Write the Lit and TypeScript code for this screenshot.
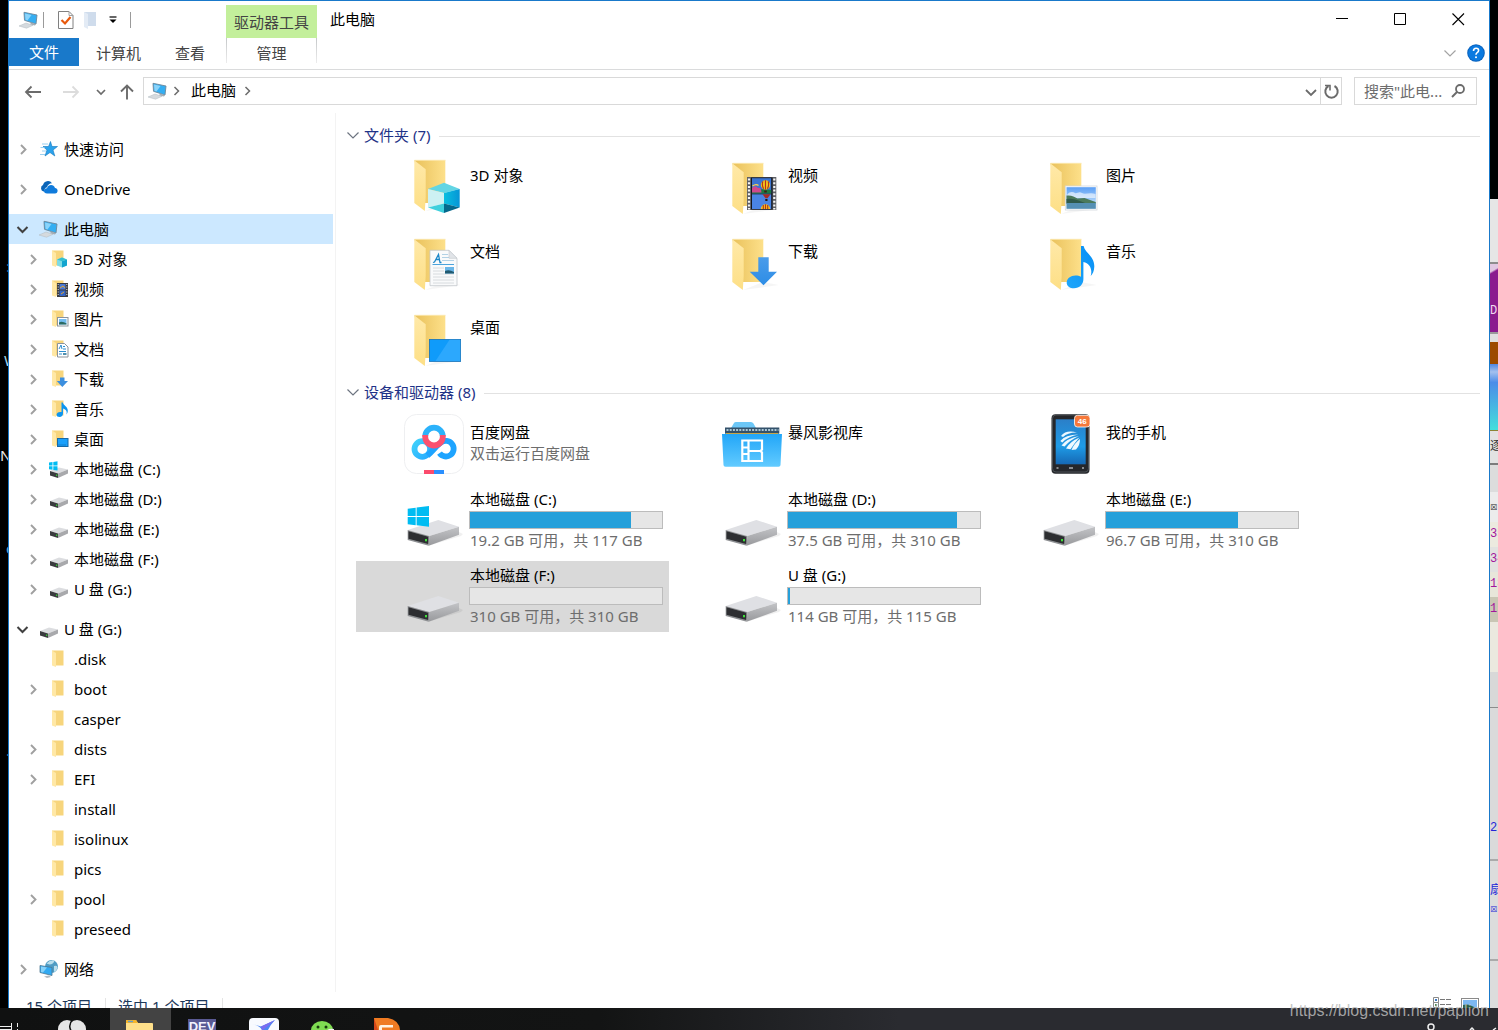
import { LitElement, html, svg, css, nothing, TemplateResult } from "lit";
import { customElement, state } from "lit/decorators.js";

type Art = TemplateResult;

interface TreeNode {
  id: string;
  label: string;
  icon: keyof typeof smallArt;
  level: 0 | 1;
  arrow?: "closed" | "open";
  spaced?: boolean;
}

interface Tile {
  label: string;
  art: Art;
  note?: string;
  used?: number;
}

interface Strip {
  h: number;
  bg: string;
  text?: string;
  ink?: string;
}

/* ---------- large tile artwork, 60 x 60 ---------- */

const folder = svg`
  <path d="M21 57l22-3 14-2-16-3z" fill="#000" opacity=".04"/>
  <path d="M10.3 6.3H41.3V49H21z" fill="url(#folderBack)"/>
  <path d="M10.3 6.3L21.700 15.3V43l-.9 14-10.500-8z" fill="url(#folderFlap)"/>
  <path d="M10.500 6.3h31" stroke="#fbe7ac" stroke-width=".8"/>`;

const cubeArt = svg`
  <g transform="translate(0 -3)">${folder}</g>
  <path d="M24 32l16-6.300L55.700 32 40 36z" fill="#62d5e4"/>
  <path d="M24 32l16 4v10.500L24 50.500z" fill="#cdf1f3"/>
  <path d="M40 36l15.700-4v18.500L40 46.500z" fill="url(#cubeSide)"/>
  <path d="M24 50.500l16-4V56z" fill="#3fd0dd"/>
  <path d="M40 46.500l15.700 4L40 56z" fill="#04688c"/>`;

const videoArt = svg`
  ${folder}
  <rect x="25" y="20" width="29.300" height="33" fill="#5d5f65"/>
  <path d="M27 21.500v31M52.300 21.500v31" stroke="#f6f6f6" stroke-width="2.200" stroke-dasharray="2 1.700"/>
  <rect x="29" y="20.500" width="21.500" height="32" fill="#15171c"/>
  <rect x="30" y="21.200" width="19.200" height="15.300" fill="#3b74d2"/>
  <path d="M30 34q9-3 19.200-1v3.500H30z" fill="#1d7a3f"/>
  <path d="M30 31q3-3.500 6 0 3-1 3.500 4.500H30z" fill="#d0488e"/>
  <path d="M30.500 29q3.500-2.500 6-.5" stroke="#ffd14a" stroke-width="1.400" fill="none"/>
  <circle cx="43.500" cy="28" r="4.700" fill="#f2c21c"/>
  <path d="M43.500 23.300v9.400M40.800 24.300q-1.200 4 .8 7.400M46.200 24.300q1.200 4-.8 7.400" stroke="#b5301c" stroke-width="1.100" fill="none"/>
  <path d="M42.200 33.500h2.600v2h-2.600z" fill="#3d2015"/>
  <rect x="30" y="37.300" width="19.200" height="14.700" fill="#4a84e4"/>
  <path d="M40.500 37.300h8l-3 4h-2z" fill="#a52c22"/><path d="M43.300 42h2.200v2h-2.200z" fill="#1c1512"/>
  <path d="M38.800 52a4.700 4.700 0 0 1 9.400 0z" fill="#f2c21c"/>
  <path d="M41.300 48v4M43.500 47.300V52M45.700 48v4" stroke="#b5301c" stroke-width="1.100"/>`;

const pictureArt = svg`
  ${folder}
  <rect x="25.300" y="29" width="31.700" height="24" fill="#fff" stroke="#d3d7dc" stroke-width=".8"/>
  <rect x="26.500" y="30.200" width="29.300" height="21.600" fill="url(#sky)"/>
  <path d="M27 38c3-4 6-3 8-2s4-2 7 0 8-1 13.500 1v4H27z" fill="#fff" opacity=".6"/>
  <path d="M26.500 38.500c5-.5 8 1 11 3l7-.5c4 1 7 3 11.300 4v1.500H26.500z" fill="#4b7a5c"/>
  <path d="M26.500 42q6-1 12 1.500l8 3H26.500z" fill="#2f5a4c"/>
  <path d="M26.500 46h29.300v5.800H26.500z" fill="#5590b4"/>`;

const docArt = svg`
  ${folder}
  <path d="M26 17.300h19l8 8V52.700H26z" fill="#f9fafb" stroke="#c3c7cc" stroke-width=".8"/>
  <path d="M45 17.300v8h8z" fill="#e1e4e8" stroke="#c3c7cc" stroke-width=".6"/>
  <path d="M29 29.500l1.500-.5 4-7.500 1.500 8h1.500M31.500 26.500h4" fill="none" stroke="#1c87c9" stroke-width="1.300"/>
  <path d="M38 21.500h6M38 24.500h7M38 27.500h12" stroke="#9fc6e0" stroke-width=".8"/>
  <path d="M28.500 31.500h21.500" stroke="#4aa3dc"/>
  <path d="M29 35h11M29 38h11M29 41h21M29 44h21M29 47h21M29 50h21" stroke="#cfd3d8" stroke-width=".8"/>
  <rect x="41" y="34" width="9" height="6.500" fill="#6ab6e8"/>
  <path d="M41 38q4-2 9 1v1.500h-9z" fill="#215a70"/>`;

const downloadArt = svg`
  ${folder}
  <path d="M36.300 24.300h10.400v14.400H55L41.500 52.300 27.700 38.700h8.600z" fill="url(#arrowFill)"/>`;

const musicArt = svg`
  ${folder}
  <path d="M41 13h2.600c1.400 7 10.800 10 10.700 20.500-.1 4.500-1.600 7.500-3.600 9.500 2-7-1-12.500-7.300-14V46c0 5.500-4 9.300-9.400 9.300-4.200 0-7.300-2-7.300-5.500 0-4.300 4-7.300 8.800-7.300 2.200 0 4 .4 5.500 1.200z" fill="url(#noteFill)"/>`;

const desktopArt = svg`
  ${folder}
  <rect x="25.400" y="30.400" width="31.200" height="22" fill="#0f9bfa" stroke="#1672b8" stroke-width=".8"/>
  <path d="M45.500 30.800h10.700v21.200H31.500z" fill="#3fb1ff" opacity=".6"/>`;

const drive = svg`
  <path d="M24.700 55.700L57 46l2-2-4-2z" fill="#000" opacity=".06"/>
  <path d="M3.700 40L34.300 30 55 36.700 25.300 46z" fill="#dfe0e4"/>
  <path d="M25.300 46L55 36.700v8L24.700 55.700z" fill="url(#driveSide)"/>
  <path d="M3.700 40l21.600 6-.6 9.700-21-5.700z" fill="#8e9093"/>
  <path d="M4.500 41.300l19.700 5.400v7.300L4.500 48.800z" fill="#2d2e31"/>
  <rect x="21" y="49" width="2" height="2.300" fill="#3ee03a"/>`;

const winLogo = svg`
  <path d="M3.700 18.800L11.700 17.700V26H3.700zM12.600 17.500L25 16v10H12.600zM3.700 27h8v8.300l-8-1zM12.600 27H25v9.700l-12.400-1.500z" fill="#00bcf2"/>`;

const systemDriveArt = svg`${drive}${winLogo}`;

const netdiskArt = svg`
  <rect x=".5" y=".5" width="59" height="59" rx="12" fill="#fff" stroke="#eeeff1"/>
  <circle cx="18.300" cy="35" r="7.800" fill="none" stroke="url(#ringLeft)" stroke-width="5.800"/>
  <path d="M23.500 41.500C29 37 33 31 37 28.600a7.800 7.800 0 1 1-1.500 10.600" fill="none" stroke="#1ea4ff" stroke-width="5.800"/>
  <path d="M21.200 22.500a8.800 8.800 0 0 1 17.600 0" fill="none" stroke="#2bb2fb" stroke-width="5.800"/>
  <path d="M21.200 21v1.700a8.800 8.800 0 0 0 17.600 0V21" fill="none" stroke="#fb5170" stroke-width="5.800"/>
  <path d="M20 56h10v4H20z" fill="#fb4a6c"/><path d="M30 56h10v4H30z" fill="#2a90ff"/>`;

const libraryArt = svg`
  <path d="M3 14h6l3-5q.5-1 2-1h15q1.500 0 2.500 1.500L34 14h23v10H3z" fill="#6cc7f7"/>
  <rect x="3" y="13.500" width="54.300" height="6" fill="#33516a"/>
  <path d="M4.500 16h52" stroke="#a9c6d6" stroke-width="2" stroke-dasharray="2 1.200"/>
  <path d="M4 19.500h52" stroke="#c9a545"/>
  <path d="M0 20h60l-1.500 31q0 1.700-2 1.700h-53q-2 0-2-1.700z" fill="url(#libraryFront)"/>
  <path d="M20.300 26.500h19.700v9l-1.500 1.500 1.500 1.500v8.500H20.300zM26.500 26.500V47M26.500 37h12" fill="none" stroke="#fff" stroke-width="2.200"/>
  <path d="M20 33.500h6M20 40h6" stroke="#fff" stroke-width="2"/>`;

const phoneArt = svg`
  <rect x="11.500" y=".3" width="38" height="59.400" rx="4" fill="#25272b"/>
  <rect x="12.500" y="1" width="36" height="57" rx="3.500" fill="none" stroke="#565a60" stroke-width=".8"/>
  <rect x="15.700" y="5.300" width="30" height="45" fill="url(#phoneScreen)"/>
  <path d="M21 22q5-6.500 16-3.500-9-.3-14 4.500zM20.300 27q5-6.500 18-6.500-10 1.800-16 8zM21.500 31.500q5-7 17.500-9.500-9 4-14.500 10.500zM26 34.500q4-7 13.500-11-5.500 6-9 11.800zM31.500 36q2.500-6.500 8.500-11 0 6.500-4 10.500z" fill="#eef9ff"/>
  <path d="M16.500 54h2M29 54h4M42 54h2" stroke="#a9adb3" stroke-width="1.500"/>
  <rect x="34.500" y="1.300" width="15.500" height="11.700" rx="3" fill="#f6783a" stroke="#fff" stroke-width=".8"/>
  <text x="42.300" y="9.900" text-anchor="middle" font-size="8" font-weight="700" fill="#fff" font-family="Liberation Sans, sans-serif">46</text>`;

/* ---------- small artwork, 20 x 20 ---------- */

const miniFolder = svg`
  <path d="M3 1.500h11.500v15H6z" fill="#f7d57c"/>
  <path d="M3 1.500l4 2.500v14L3 16.500z" fill="#ffe8a6"/>`;

const miniDrive = svg`
  <path d="M1 12l9-3.500 9 2-10 4z" fill="#dcdde0"/>
  <path d="M9 14.500l10-4v4L9 19z" fill="#a8a9ac"/>
  <path d="M1 12l8 2.500V19l-8-2.500z" fill="#3a3b3e"/>
  <rect x="7" y="15.500" width="1.300" height="1.500" fill="#35c733"/>`;

const computer = svg`
  <path d="M5 2.300L18 5l-1 9-11.500-3.700z" fill="#35aef2" stroke="#6e8799" stroke-width=".9"/>
  <path d="M6 3.500l6.500 1.500-4 5.500-2-.8z" fill="#8ad4fb"/>
  <path d="M12 12.500l5 1.500-1 1.500-5-1z" fill="#a3adb5"/>
  <path d="M0 16l7-3 7 2.300-6.500 2.900z" fill="#d5dade" stroke="#b3bac0" stroke-width=".5"/>`;

const smallArt = {
  star: svg`
    <path d="M11.500 2.500l1.500 5h5.500l-4.500 3.500 1.800 6-4.800-3.500-5 3.500 2-6-4-3.500h5.500z" fill="#2aa2ec" stroke="#1277bd" stroke-width=".6"/>
    <path d="M3 5h6M1.500 8.500h4M3 12h4M1 15.500h5" stroke="#9bd0f0"/>`,
  cloud: svg`
    <path d="M4.500 12.500a3.500 3.500 0 0 1-.5-6.500A5 5 0 0 1 13 4.200q-4 .3-5 4-3 .8-2.500 4.300z" fill="#0a64b8"/>
    <path d="M8 14.500c-4 0-4-5 0-5.300C9 5 15 5 16 9c3.500.3 3.500 5.500 0 5.500z" fill="#0f7bdc"/>`,
  computer,
  cube: svg`${miniFolder}<path d="M8 10.500l5-2 5 2v6l-5 2-5-2z" fill="#7fdbe5"/><path d="M13 12.300l5-1.800v6l-5 2z" fill="#12a5cf"/><path d="M8 10.500l5-2 5 2-5 1.800z" fill="#35bfd0"/>`,
  film: svg`${miniFolder}<rect x="8" y="4" width="11" height="14" fill="#3c3c3e"/><rect x="10.500" y="5" width="6" height="5.500" fill="#4a79d4"/><rect x="10.500" y="11.500" width="6" height="5.500" fill="#3566c4"/><path d="M11 9l3-2 2 2M12 15l3-2" stroke="#e3a530" fill="none"/><path d="M9.200 5v12M17.800 5v12" stroke="#ddd" stroke-dasharray="1 1.500"/>`,
  picture: svg`${miniFolder}<rect x="8.500" y="8.500" width="10.500" height="8.500" fill="#fff" stroke="#8b939a"/><rect x="10" y="10" width="7.500" height="5.500" fill="#74bdf0"/><path d="M10 13.500q3-2 7.500 1v1H10z" fill="#2c6a62"/>`,
  doc: svg`${miniFolder}<path d="M8.500 4.500h7l3.500 3.500v10H8.500z" fill="#fff" stroke="#8b939a"/><path d="M10 10l2-4 1 4M10 12.500h7M10 15h3M14 7.500h2M14 10h3" stroke="#2c8fd0" fill="none"/><rect x="14" y="14" width="3.500" height="2" fill="#4e8fae"/>`,
  download: svg`${miniFolder}<path d="M11 8.500h4.500V12H19l-5.700 6L7.800 12H11z" fill="#3c8fdf"/>`,
  music: svg`${miniFolder}<path d="M12.500 3.500h1.300c.5 3 5.200 4 5 8.500-.1 1.500-.6 2.500-1.500 3.500 1.200-3-.2-5-3.300-6v5c0 2.200-1.500 3.500-3.400 3.500s-3-1-3-2.300c0-1.700 2-3.200 4.900-2.600z" fill="#0d95f0"/>`,
  desktop: svg`${miniFolder}<rect x="8.500" y="9.500" width="10.500" height="8" fill="#1aa0fb" stroke="#1769a6"/><path d="M9.500 16h8" stroke="#0f5c98" stroke-dasharray="1 1"/>`,
  systemDrive: svg`${miniDrive}<path d="M0 3.500l3.500-.5v3.500H0zM4.300 2.900L8.500 2.300v4.200H4.300zM0 7.300h3.500v3.500L0 10.300zM4.300 7.300h4.200v4.200l-4.200-.6z" fill="#00bcf2"/>`,
  drive: miniDrive,
  folder: miniFolder,
  network: svg`
    <circle cx="12.500" cy="7.500" r="6.500" fill="#4f9cc4"/><path d="M7.500 4.500q4-4 8-3-1 4-5 4zM15 7q3-1 3.500 1-.5 4-3.500 5z" fill="#b9deec"/>
    <path d="M1 6.500l12 2v8L1 13.500z" fill="#32aaf2" stroke="#4f7790" stroke-width=".8"/>
    <path d="M2 7.500l6 1-4 5-2-.5z" fill="#86d2fa"/><path d="M5 17.500l5-1 2 1.500-4 1z" fill="#b3bac0"/>`,
};

const n = (
  id: string,
  label: string,
  icon: keyof typeof smallArt,
  level: 0 | 1,
  arrow?: "closed" | "open",
  spaced = false,
): TreeNode => ({ id, label, icon, level, arrow, spaced });

const TREE: TreeNode[] = [
  n("quick", "快速访问", "star", 0, "closed"),
  n("onedrive", "OneDrive", "cloud", 0, "closed", true),
  n("pc", "此电脑", "computer", 0, "open", true),
  n("objects", "3D 对象", "cube", 1, "closed"),
  n("videos", "视频", "film", 1, "closed"),
  n("pictures", "图片", "picture", 1, "closed"),
  n("documents", "文档", "doc", 1, "closed"),
  n("downloads", "下载", "download", 1, "closed"),
  n("music", "音乐", "music", 1, "closed"),
  n("desktop", "桌面", "desktop", 1, "closed"),
  n("c", "本地磁盘 (C:)", "systemDrive", 1, "closed"),
  n("d", "本地磁盘 (D:)", "drive", 1, "closed"),
  n("e", "本地磁盘 (E:)", "drive", 1, "closed"),
  n("f", "本地磁盘 (F:)", "drive", 1, "closed"),
  n("g", "U 盘 (G:)", "drive", 1, "closed"),
  n("usb", "U 盘 (G:)", "drive", 0, "open", true),
  n("disk", ".disk", "folder", 1),
  n("boot", "boot", "folder", 1, "closed"),
  n("casper", "casper", "folder", 1),
  n("dists", "dists", "folder", 1, "closed"),
  n("efi", "EFI", "folder", 1, "closed"),
  n("install", "install", "folder", 1),
  n("isolinux", "isolinux", "folder", 1),
  n("pics", "pics", "folder", 1),
  n("pool", "pool", "folder", 1, "closed"),
  n("preseed", "preseed", "folder", 1),
  n("network", "网络", "network", 0, "closed", true),
];

const FOLDERS: Tile[] = [
  { label: "3D 对象", art: cubeArt },
  { label: "视频", art: videoArt },
  { label: "图片", art: pictureArt },
  { label: "文档", art: docArt },
  { label: "下载", art: downloadArt },
  { label: "音乐", art: musicArt },
  { label: "桌面", art: desktopArt },
];

const DEVICES: Tile[] = [
  { label: "百度网盘", art: netdiskArt, note: "双击运行百度网盘" },
  { label: "暴风影视库", art: libraryArt },
  { label: "我的手机", art: phoneArt },
  { label: "本地磁盘 (C:)", art: systemDriveArt, note: "19.2 GB 可用，共 117 GB", used: 84 },
  { label: "本地磁盘 (D:)", art: drive, note: "37.5 GB 可用，共 310 GB", used: 88 },
  { label: "本地磁盘 (E:)", art: drive, note: "96.7 GB 可用，共 310 GB", used: 69 },
  { label: "本地磁盘 (F:)", art: drive, note: "310 GB 可用，共 310 GB", used: 0 },
  { label: "U 盘 (G:)", art: drive, note: "114 GB 可用，共 115 GB", used: 1 },
];

/* Slices of the browser window that shows past the right edge. */
const BEHIND: Strip[] = [
  { h: 199, bg: "#000" },
  { h: 63, bg: "#e6e6e6" },
  { h: 2, bg: "#8c8c8c" },
  { h: 36, bg: "linear-gradient(150deg, #e0c8e2 7px, #8a1b8e 9px)" },
  { h: 22, bg: "#8a1b8e", text: "D", ink: "#f0d8f0" },
  { h: 10, bg: "#8a1b8e" },
  { h: 2, bg: "#999" },
  { h: 8, bg: "#e0e0e0" },
  { h: 22, bg: "#9c4a00" },
  { h: 66, bg: "linear-gradient(#4f86e4, #a3c0ee 12%, #4b8ce8 28%, #44dfdc)" },
  { h: 1, bg: "#8c8434" },
  { h: 32, bg: "#e2e2e2", text: "逐", ink: "#333" },
  { h: 2, bg: "#7c7c7c" },
  { h: 27, bg: "#dcdcdc" },
  { h: 30, bg: "#ececec", text: "☒", ink: "#222" },
  { h: 25, bg: "#eceadf", text: "35", ink: "#a3159c" },
  { h: 25, bg: "#e2e2e0", text: "34", ink: "#a3159c" },
  { h: 25, bg: "#e8e6da", text: "18", ink: "#a3159c" },
  { h: 25, bg: "#c9c6b4", text: "15", ink: "#a3159c" },
  { h: 50, bg: "#ebe9df" },
  { h: 35, bg: "#d8d8d8" },
  { h: 1, bg: "#8c8c8c" },
  { h: 104, bg: "#dadada" },
  { h: 32, bg: "#dadada", text: "2:", ink: "#2424d8" },
  { h: 15, bg: "#dadada" },
  { h: 2, bg: "#aaa" },
  { h: 20, bg: "#dcdcdc" },
  { h: 20, bg: "#dcdcdc", text: "扇", ink: "#2424d8" },
  { h: 16, bg: "#dcdcdc", text: "☒", ink: "#2424d8" },
  { h: 42, bg: "#dcdcdc" },
  { h: 2, bg: "#aaa" },
];

const TASKS: { name: string; art: Art }[] = [
  {
    name: "任务视图",
    art: svg`<circle cx="18" cy="21" r="9" fill="#e6e6e6"/><circle cx="28" cy="21" r="9" fill="#e6e6e6"/><path d="M24 11q-6 7-1 13" stroke="#131414" stroke-width="1.500" fill="none"/>`,
  },
  {
    name: "文件资源管理器",
    art: svg`<path d="M16 13q0-1 1-1h9l2 3h14q1 0 1 1v6H16z" fill="#ffe08a"/><path d="M16 13q0-1 1-1h9l2 3H16z" fill="#f5b52a"/><path d="M18 13.500h5" stroke="#6b9ec4" stroke-width="1.500"/>`,
  },
  {
    name: "Dev",
    art: svg`<rect x="17" y="11" width="28" height="12" fill="#5a5a94"/><text x="31" y="23" text-anchor="middle" font-size="13" font-weight="700" fill="#f2f2ff" font-family="Liberation Sans, sans-serif">DEV</text>`,
  },
  {
    name: "迅雷",
    art: svg`<rect x="17" y="10" width="30" height="18" rx="4" fill="#f8faff"/><path d="M20 16l9 2.500L43 12q-4 4-7 10h-6q-2-4-10-6z" fill="#4b86f2"/><path d="M29 18.500L43 12 31 22h-1z" fill="#7a6cf0"/>`,
  },
  {
    name: "微信",
    art: svg`<ellipse cx="29" cy="22.500" rx="11" ry="9.500" fill="#7fdc52"/><circle cx="25" cy="19" r="1.500" fill="#173b0c"/><circle cx="33" cy="19" r="1.500" fill="#173b0c"/><path d="M32 24q3-4 9-3v3z" fill="#f4f4f4"/>`,
  },
  {
    name: "阅读器",
    art: svg`<path d="M20 10h14q11 2 12 12H20z" fill="#f07b22"/><path d="M20 10l4 12h-4z" fill="#d5481a"/><path d="M25 22v-3q0-2 2-2h12v2.500H28V22z" fill="#fff3e2"/>`,
  },
];

const chevronRight = svg`<path d="M5 3l4.500 4.500L5 12" fill="none" stroke="currentColor" stroke-width="1.900"/>`;
const chevronThin = svg`<path d="M1.500 4.500L7 10l5.500-5.500" fill="none" stroke="currentColor" stroke-width="1.200"/>`;
const chevronCrumb = svg`<path d="M4.500 3l4 4-4 4" fill="none" stroke="currentColor" stroke-width="1.500"/>`;

const glyph = (size: number, art: Art, cls = "") =>
  html`<svg class=${cls} width=${size} height=${size} viewBox="0 0 ${size} ${size}" aria-hidden="true">${art}</svg>`;

@customElement("app-root")
export class AppRoot extends LitElement {
  static styles = css`
    :host {
      display: block;
      font-family: "Noto Sans", "Noto Sans CJK SC", sans-serif;
      font-size: 15px;
      line-height: 21px;
      color: #000;
    }
    * { box-sizing: border-box; }
    button, input {
      font: inherit;
      color: inherit;
      background: none;
      border: 0;
      padding: 0;
      margin: 0;
      text-align: left;
    }
    svg { display: block; flex: none; }
    h1, h2 { margin: 0; font-size: 15px; font-weight: 400; }
    .desktop {
      position: relative;
      display: grid;
      grid-template-columns: 8px minmax(0, 1fr) 8px;
      min-height: 100vh;
      padding-bottom: 8px;
      background: #000;
      overflow: hidden;
    }
    .left { position: relative; overflow: hidden; color: #e8e8e8; }
    .stray { position: absolute; left: 0; }
    .s1 { top: 256px; left: 6px; color: #1e6f9c; }
    .s2 { top: 350px; left: 4px; color: #a7d8e8; }
    .s3 { top: 445px; }
    .s4 { top: 538px; left: 6px; color: #5fb2dc; }
    .s5 { top: 740px; left: 6px; color: #2d80a5; }
    .behind { overflow: hidden; background: #dcdcdc; }
    .slice {
      display: flex;
      align-items: center;
      overflow: hidden;
      white-space: nowrap;
      font-family: "Liberation Mono", "Noto Sans CJK SC", monospace;
      font-size: 12px;
    }
    .window {
      display: flex;
      flex-direction: column;
      background: #fff;
      border: solid #1979ca;
      border-width: 1px 1px 0;
    }
    .header {
      display: grid;
      grid-template-columns: 217px 91px minmax(0, 1fr) auto;
      grid-template-rows: 37px 31px;
      border-bottom: 1px solid #dadbdc;
    }
    .quick { display: flex; align-items: center; padding-left: 10px; }
    .quick .rule { width: 1px; height: 16px; background: #9a9a9a; margin-left: 4px; }
    .quick .check { margin-left: 12px; }
    .quick .ghost { margin-left: 8px; }
    .quick .more { margin-left: 5px; }
    .quick .last { margin-left: 13px; }
    .context {
      margin-top: 4px;
      background: #c3ef9b;
      color: #444;
      text-align: center;
      line-height: 34px;
    }
    .title { padding-left: 13px; line-height: 37px; }
    .controls { display: flex; padding-right: 2px; }
    .controls button { width: 58px; display: grid; place-items: center; }
    .tabs { display: flex; align-items: flex-start; }
    .tab { height: 30px; padding: 0 17px; color: #444; line-height: 30px; }
    .file { width: 70px; padding: 0; text-align: center; background: #1979ca; color: #fff; height: 28px; line-height: 28px; }
    .manage {
      padding: 0;
      text-align: center;
      border: 1px solid;
      border-width: 0 1px;
      border-image: linear-gradient(#c4c6c8, #eee) 1;
      height: 25px;
    }
    .help { grid-column: 4; display: flex; gap: 10px; justify-content: flex-end; align-items: center; padding: 0 4px 2px 0; color: #a3a3a3; }
    .nav { display: flex; align-items: center; height: 43px; padding: 0 12px 2px 15px; color: #6b6b6b; }
    .back { margin-right: 20px; }
    .forward { color: #dcdcdc; margin-right: 16px; }
    .recent { margin-right: 12px; }
    .up { margin-right: 7px; }
    .address {
      flex: 1;
      display: flex;
      align-items: center;
      height: 28px;
      padding-left: 4px;
      border: 1px solid #d9d9d9;
    }
    .crumb { color: #000; padding: 0 5px 0 7px; }
    .crumbsep { margin-left: 2px; }
    .grow { flex: 1; }
    .refresh { height: 26px; width: 21px; margin-left: 2px; border-left: 1px solid #d9d9d9; display: grid; place-items: center; }
    .search {
      display: flex;
      align-items: center;
      width: 123px;
      height: 28px;
      margin-left: 12px;
      padding: 0 10px 0 9px;
      border: 1px solid #d9d9d9;
    }
    .search input { flex: 1; min-width: 0; height: 24px; outline: none; }
    .search input::placeholder { color: #6d6d6d; opacity: 1; }
    .body { flex: 1; display: flex; }
    .tree { width: 327px; flex: none; padding: 21px 2px 8px 0; border-right: 1px solid #f3f3f3; }
    .node { display: flex; align-items: center; width: 100%; height: 30px; padding-left: 7px; }
    .child { padding-left: 17px; }
    .spaced { margin-top: 10px; }
    .selected { background: #cce8ff; }
    .arrow { width: 14px; height: 14px; margin-right: 9px; color: #a0a0a0; }
    .open { color: #404040; }
    .name { margin-left: 5px; }
    .content { flex: 1; min-width: 0; padding: 5px 9px 0 10px; }
    .group { display: flex; align-items: center; height: 34px; gap: 4px; color: #1e3287; }
    .group button { color: #6d7480; }
    .group::after { content: ""; flex: 1; height: 1px; margin: 2px 0 0 4px; background: #e2e2e2; }
    .tiles { display: grid; grid-template-columns: repeat(auto-fill, 313px); gap: 5px; padding-left: 10px; }
    .tile { display: flex; align-items: flex-start; gap: 5px; height: 71px; padding: 5px 0 0 48px; }
    .picked { background: #d9d9d9; }
    .text { display: flex; flex-direction: column; width: 194px; padding-top: 8px; }
    .text.full { padding-top: 0; margin-top: -1px; gap: 1px; }
    .line { padding-left: 1px; }
    .note { color: #6d6d6d; }
    .bar { height: 18px; background: #e6e6e6; border: 1px solid #bcbcbc; }
    .fill { display: block; height: 100%; background: #26a0da; }
    .status { display: flex; align-items: center; height: 30px; padding: 0 9px 2px 17px; color: #1e395b; }
    .status .mark { width: 1px; height: 16px; background: #e4e4e4; margin: 0 12px 0 13px; }
    .views { display: flex; gap: 8px; margin-left: auto; }
    .taskbar {
      position: absolute;
      left: 0;
      right: 0;
      bottom: 0;
      height: 22px;
      display: flex;
      background: linear-gradient(90deg, #101111, #131414 40%, #2a2b30 60%, #2a2b30);
    }
    .running { background: #434343; }
    .tray { margin-left: auto; }
    .stamp {
      position: absolute;
      right: 9px;
      bottom: 10px;
      font: 16px/18px "Liberation Sans", sans-serif;
      color: rgba(185, 185, 185, 0.85);
    }
    .defs { position: absolute; width: 0; height: 0; }
  `;

  @state() private node = "pc";
  @state() private picked = "本地磁盘 (F:)";

  private defs() {
    return html`<svg class="defs" aria-hidden="true"><defs>
      <linearGradient id="folderBack" x1="0" y1="0" x2="1" y2="0"><stop offset="0" stop-color="#e9c15b"/><stop offset="1" stop-color="#fde08a"/></linearGradient>
      <linearGradient id="folderFlap" x1="0" y1="0" x2="0" y2="1"><stop offset="0" stop-color="#ffe9a8"/><stop offset="1" stop-color="#fddf86"/></linearGradient>
      <linearGradient id="cubeSide" x1="0" y1="0" x2="1" y2="0"><stop offset="0" stop-color="#08bfe0"/><stop offset="1" stop-color="#0695d6"/></linearGradient>
      <linearGradient id="sky" x1="0" y1="0" x2="0" y2="1"><stop offset="0" stop-color="#5b9ff5"/><stop offset="1" stop-color="#d9eefc"/></linearGradient>
      <linearGradient id="arrowFill" x1="0" y1="0" x2="0" y2="1"><stop offset="0" stop-color="#4a9cea"/><stop offset="1" stop-color="#2d8de6"/></linearGradient>
      <linearGradient id="noteFill" x1="0" y1="1" x2="1" y2="0"><stop offset="0" stop-color="#1fa6fa"/><stop offset="1" stop-color="#078ff5"/></linearGradient>
      <linearGradient id="driveSide" x1="0" y1="0" x2="0" y2="1"><stop offset="0" stop-color="#c3c4c7"/><stop offset="1" stop-color="#98999c"/></linearGradient>
      <linearGradient id="ringLeft" x1="0" y1="0" x2="1" y2="1"><stop offset="0" stop-color="#3fd0fb"/><stop offset="1" stop-color="#27abff"/></linearGradient>
      <linearGradient id="libraryFront" x1="0" y1="0" x2="0" y2="1"><stop offset="0" stop-color="#22a6f8"/><stop offset="1" stop-color="#62cbff"/></linearGradient>
      <linearGradient id="phoneScreen" x1="0" y1="0" x2="0" y2="1"><stop offset="0" stop-color="#2b7fc8"/><stop offset=".6" stop-color="#1e9be6"/><stop offset="1" stop-color="#1668b4"/></linearGradient>
    </defs></svg>`;
  }

  private header() {
    return html`<header class="header">
      <div class="quick">
        ${glyph(20, computer)}
        <span class="rule"></span>
        <button class="check" aria-label="属性">${glyph(20, svg`
          <path d="M2.500 1.500h10.500l4 4v13H2.500z" fill="#fff" stroke="#808080"/><path d="M13 1.500v4h4" fill="none" stroke="#a0a0a0"/>
          <path d="M5.500 10l3.500 3.500L14.500 7" fill="none" stroke="#e8590c" stroke-width="2.200"/>`)}</button>
        <button class="ghost" aria-label="新建文件夹">${glyph(20, svg`
          <path d="M0 2h12v14H4z" fill="#cfdcec"/><path d="M0 2l4 2v15l-4-2z" fill="#e3ebf5"/>`)}</button>
        <button class="more" aria-label="自定义快速访问工具栏">${glyph(8, svg`<path d="M.5 1h7" stroke="#000" stroke-width="1.200"/><path d="M.5 3.500h7L4 7z"/>`)}</button>
        <span class="rule last"></span>
      </div>
      <div class="context">驱动器工具</div>
      <h1 class="title">此电脑</h1>
      <div class="controls">
        <button aria-label="最小化">${glyph(13, svg`<path d="M0 5.500h12" stroke="#000"/>`)}</button>
        <button aria-label="最大化">${glyph(13, svg`<path d="M.5 .5h11v11H.5z" fill="none" stroke="#000"/>`)}</button>
        <button aria-label="关闭">${glyph(13, svg`<path d="M.5 .5l11.500 11.500M12 .5L.5 12" stroke="#000" stroke-width="1.100"/>`)}</button>
      </div>
      <div class="tabs">
        <button class="tab file">文件</button>
        <button class="tab">计算机</button>
        <button class="tab">查看</button>
      </div>
      <button class="tab manage">管理</button>
      <div class="help">
        <button aria-label="展开功能区">${glyph(14, chevronThin)}</button>
        <button aria-label="帮助">${glyph(18, svg`
          <circle cx="9" cy="9" r="8.800" fill="#0a62bd"/><circle cx="9" cy="9" r="7.800" fill="#0b7ae0"/>
          <path d="M6.500 7q0-2.700 2.600-2.700 2.500 0 2.500 2.200 0 1.300-1.400 2.200-1.200.8-1.200 2" fill="none" stroke="#fff" stroke-width="1.600"/>
          <circle cx="9" cy="13.200" r="1" fill="#fff"/>`)}</button>
      </div>
    </header>`;
  }

  private navBar() {
    return html`<div class="nav">
      <button class="back" aria-label="后退">${glyph(18, svg`<path d="M17 10H2M7.500 4.500L2 10l5.500 5.500" fill="none" stroke="currentColor" stroke-width="1.800"/>`)}</button>
      <button class="forward" aria-label="前进">${glyph(18, svg`<path d="M1 10h15M10.500 4.500L16 10l-5.500 5.500" fill="none" stroke="currentColor" stroke-width="1.800"/>`)}</button>
      <button class="recent" aria-label="最近浏览的位置">${glyph(10, svg`<path d="M1 4l4 4 4-4" fill="none" stroke="currentColor" stroke-width="1.700"/>`)}</button>
      <button class="up" aria-label="上移">${glyph(18, svg`<path d="M9 17.500V3.500M3 9.500l6-6 6 6" fill="none" stroke="currentColor" stroke-width="1.900"/>`)}</button>
      <div class="address">
        ${glyph(20, computer)}
        ${glyph(14, chevronCrumb, "crumbsep")}
        <button class="crumb">此电脑</button>
        ${glyph(14, chevronCrumb)}
        <span class="grow"></span>
        <button aria-label="以前的位置">${glyph(14, svg`<path d="M2 6l5 5 5-5" fill="none" stroke="currentColor" stroke-width="1.800"/>`)}</button>
        <button class="refresh" aria-label="刷新">${glyph(18, svg`
          <path d="M12.500 4a6.200 6.200 0 1 1-6 0" fill="none" stroke="currentColor" stroke-width="2"/><path d="M3 3.500h5v5" fill="none" stroke="currentColor" stroke-width="1.600"/>`)}</button>
      </div>
      <label class="search">
        <input type="text" aria-label="搜索" placeholder='搜索"此电...' />
        ${glyph(16, svg`<circle cx="10" cy="6" r="4" fill="none" stroke="currentColor" stroke-width="1.800"/><path d="M7 9l-5 5" stroke="currentColor" stroke-width="2"/>`)}
      </label>
    </div>`;
  }

  private row(item: TreeNode) {
    const cls = ["node", item.level ? "child" : "", item.spaced ? "spaced" : "", this.node === item.id ? "selected" : ""]
      .filter(Boolean)
      .join(" ");
    return html`<button class=${cls} @click=${() => (this.node = item.id)}>
      <span class="arrow ${item.arrow ?? ""}">
        ${item.arrow ? glyph(14, item.arrow === "open" ? svg`<path d="M1.500 5L6.500 10l5-5" fill="none" stroke="currentColor" stroke-width="2"/>` : chevronRight) : nothing}
      </span>
      ${glyph(20, smallArt[item.icon])}
      <span class="name">${item.label}</span>
    </button>`;
  }

  private tile(item: Tile) {
    const hasBar = item.used !== undefined;
    return html`<button class="tile ${this.picked === item.label ? "picked" : ""}" @click=${() => (this.picked = item.label)}>
      ${glyph(60, item.art)}
      <span class="text ${hasBar ? "full" : ""}">
        <span class="line">${item.label}</span>
        ${hasBar
          ? html`<span class="bar"><span class="fill" style="width:${item.used}%"></span></span>`
          : nothing}
        ${item.note ? html`<span class="line note">${item.note}</span>` : nothing}
      </span>
    </button>`;
  }

  private group(title: string, items: Tile[]) {
    return html`<section>
      <div class="group">
        <button aria-label="折叠">${glyph(14, chevronThin)}</button>
        <h2>${title} (${items.length})</h2>
      </div>
      <div class="tiles">${items.map((t) => this.tile(t))}</div>
    </section>`;
  }

  private statusBar() {
    return html`<footer class="status">
      <span>15 个项目</span><span class="mark"></span>
      <span>选中 1 个项目</span><span class="mark"></span>
      <div class="views">
        <button aria-label="详细信息">${glyph(20, svg`
          <path d="M1.500 1.500h5v5h-5zM1.500 6.500h5v5h-5z" fill="#fff" stroke="#8a8a8a"/><rect x="3" y="3" width="2" height="2" fill="#3b78c4"/><rect x="3" y="8" width="2" height="2" fill="#5c8a2c"/>
          <path d="M8 3.500h5M14 3.500h5M8 8.500h5M14 8.500h5" stroke="#777"/>`)}</button>
        <button aria-label="大图标">${glyph(20, svg`
          <rect x="1.500" y="2.500" width="17" height="14" fill="#fff" stroke="#8a8a8a"/><rect x="3" y="4" width="14" height="11" fill="#7db8f2"/><path d="M3 9q6-2 14 4v2H3z" fill="#2c6048"/>`)}</button>
      </div>
    </footer>`;
  }

  render() {
    return html`
      ${this.defs()}
      <div class="desktop" lang="zh-CN">
        <div class="left">
          <span class="stray s1">:</span><span class="stray s2">W</span><span class="stray s3">N</span>
          <span class="stray s4">c</span><span class="stray s5">.</span>
        </div>
        <main class="window">
          ${this.header()} ${this.navBar()}
          <div class="body">
            <nav class="tree" aria-label="导航窗格">${TREE.map((t) => this.row(t))}</nav>
            <div class="content">${this.group("文件夹", FOLDERS)} ${this.group("设备和驱动器", DEVICES)}</div>
          </div>
          ${this.statusBar()}
        </main>
        <div class="behind">
          ${BEHIND.map((s) => html`<div class="slice" style="height:${s.h}px;background:${s.bg};color:${s.ink ?? "#000"}">${s.text ?? ""}</div>`)}
        </div>
        <div class="taskbar">
          <svg width="49" height="22" viewBox="0 0 49 22" aria-hidden="true">
            <path d="M0 18.500h12M0 21.500h12M11.500 15v6M17.500 15v4M17.500 21v1" stroke="#eee"/>
          </svg>
          ${TASKS.map((t, i) => html`<button class=${i === 1 ? "running" : ""} aria-label=${t.name}>
            <svg width="61" height="22" viewBox="0 0 61 22" aria-hidden="true">${t.art}</svg>
          </button>`)}
          <svg class="tray" width="80" height="22" viewBox="0 0 80 22" aria-hidden="true">
            <circle cx="13" cy="19" r="3" fill="none" stroke="#eee" stroke-width="1.500"/>
            <path d="M52 22l2-2 2 2M75 22l3-2" stroke="#eee" stroke-width="1.500" fill="none"/>
          </svg>
        </div>
        <div class="stamp">https://blog.csdn.net/paplion</div>
      </div>
    `;
  }
}
